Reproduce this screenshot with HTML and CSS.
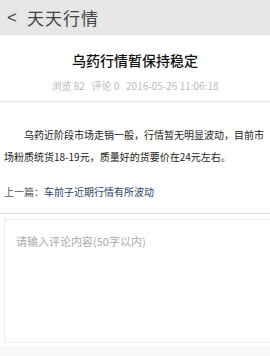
FILE: index.html
```html
<!DOCTYPE html>
<html lang="zh">
<head>
<meta charset="utf-8">
<link rel="stylesheet" href="styles.css">
</head>
<body>
<header class="topbar">
  <span class="back">&lt;</span>
  <span class="topbar-title">天天行情</span>
</header>
<section class="article-head">
  <h1 class="article-title">乌药行情暂保持稳定</h1>
  <div class="meta">浏览 82&nbsp;&nbsp;&nbsp;评论 0&nbsp;&nbsp;&nbsp;2016-05-26 11:06:18</div>
</section>
<div class="sep"></div>
<article class="content">
  <p class="para">乌药近阶段市场走销一般，行情暂无明显波动，目前市场粉质统货18-19元，质量好的货要价在24元左右。</p>
  <div class="prev"><span class="prev-label">上一篇：</span><a class="prev-link">车前子近期行情有所波动</a></div>
</article>
<div class="comment-wrap">
  <div class="comment-box">请输入评论内容(50字以内)</div>
</div>
</body>
</html>
```
FILE: styles.css
```css
html, body {
  margin: 0;
  padding: 0;
  background: #f8f8f8;
  font-family: "Noto Sans CJK SC", "Liberation Sans", sans-serif;
}
.topbar {
  height: 35px;
  background: #e6e6e6;
  display: flex;
  align-items: center;
  padding-left: 7px;
  color: #444;
}
.back {
  font-size: 17px;
  font-family: "Liberation Sans", sans-serif;
  width: 20px;
}
.topbar-title {
  font-size: 17px;
  letter-spacing: 1px;
}
.article-head {
  text-align: center;
  padding-top: 15px;
  height: 50px;
  background: #fff;
}
.article-title {
  margin: 0;
  font-size: 14px;
  font-weight: 500;
  color: #111;
  line-height: 20px;
}
.meta {
  margin-top: 9px;
  font-size: 10px;
  color: #bbb;
  line-height: 14px;
}
.sep {
  height: 3px;
  background: #f3f3f3;
}
.content {
  padding: 21px 4px 0 4px;
  background: #fff;
}
.para {
  margin: 0;
  font-size: 10px;
  line-height: 22px;
  text-indent: 2em;
  color: #222;
}
.prev {
  margin-top: 17px;
  font-size: 10px;
  line-height: 14px;
  padding-bottom: 14px;
  border-bottom: 1px solid #ddd;
  margin-left: -4px;
  margin-right: -4px;
  padding-left: 4px;
}
.prev-label { color: #555; }
.prev-link { color: #2a4566; }
.comment-wrap {
  padding: 5px 0 3px 4px;
  background: #fff;
}
.comment-box {
  box-sizing: border-box;
  height: 124px;
  border: 1px solid #ececec;
  border-right: none;
  padding: 13px 11px;
  font-size: 11px;
  color: #aaa;
  line-height: 16px;
}
```
